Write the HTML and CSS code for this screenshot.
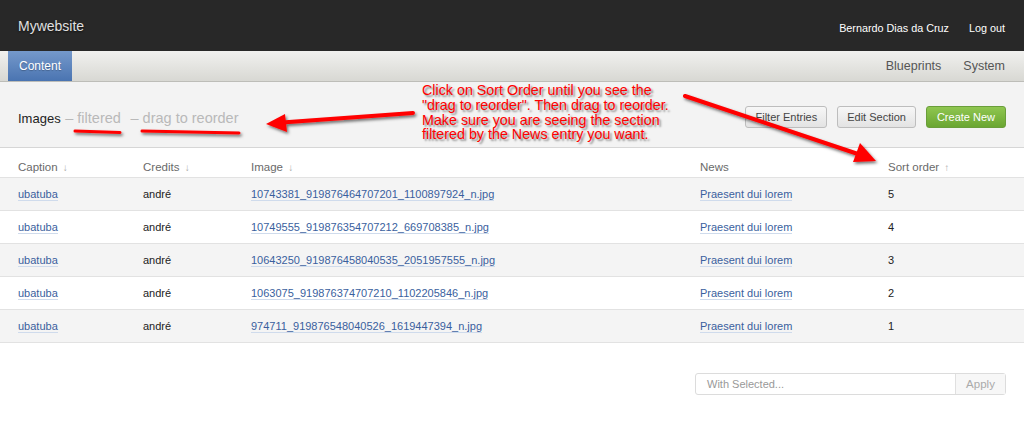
FILE: index.html
```html
<!DOCTYPE html>
<html>
<head>
<meta charset="utf-8">
<link rel="stylesheet" href="styles.css">
</head>
<body>
<header class="topbar">
  <div class="brand">Mywebsite</div>
  <div class="user">
    <span>Bernardo Dias da Cruz</span>
    <span>Log out</span>
  </div>
</header>
<nav class="navbar">
  <div class="tabs"><span class="tab active">Content</span></div>
  <div class="tabs right"><span class="tab">Blueprints</span><span class="tab">System</span></div>
</nav>
<section class="section-head">
  <h1 class="title">Images <span class="muted">– filtered</span> <span class="muted second">– drag to reorder</span></h1>
  <div class="actions">
    <button class="btn">Filter Entries</button>
    <button class="btn">Edit Section</button>
    <button class="btn primary">Create New</button>
  </div>
</section>
<table class="entries">
  <colgroup><col class="c1"><col class="c2"><col class="c3"><col class="c4"><col></colgroup>
  <thead>
    <tr><th>Caption <i>↓</i></th><th>Credits <i>↓</i></th><th>Image <i>↓</i></th><th>News</th><th>Sort order <i>↑</i></th></tr>
  </thead>
  <tbody>
    <tr class="odd"><td><a>ubatuba</a></td><td>andré</td><td><a>10743381_919876464707201_1100897924_n.jpg</a></td><td><a>Praesent dui lorem</a></td><td>5</td></tr>
    <tr><td><a>ubatuba</a></td><td>andré</td><td><a>10749555_919876354707212_669708385_n.jpg</a></td><td><a>Praesent dui lorem</a></td><td>4</td></tr>
    <tr class="odd"><td><a>ubatuba</a></td><td>andré</td><td><a>10643250_919876458040535_2051957555_n.jpg</a></td><td><a>Praesent dui lorem</a></td><td>3</td></tr>
    <tr><td><a>ubatuba</a></td><td>andré</td><td><a>1063075_919876374707210_1102205846_n.jpg</a></td><td><a>Praesent dui lorem</a></td><td>2</td></tr>
    <tr class="odd"><td><a>ubatuba</a></td><td>andré</td><td><a>974711_919876548040526_1619447394_n.jpg</a></td><td><a>Praesent dui lorem</a></td><td>1</td></tr>
  </tbody>
</table>
<div class="bulk">
  <div class="bulk-box"><span class="bulk-select">With Selected...</span><span class="bulk-apply">Apply</span></div>
</div>

<p class="note">Click on Sort Order until you see the "drag to reorder". Then drag to reorder. Make sure you are seeing the section filtered by the News entry you want.</p>
<svg class="marks" width="1024" height="425" viewBox="0 0 1024 425">
  <defs>
    <filter id="sh" x="-20%" y="-50%" width="140%" height="200%">
      <feDropShadow dx="1.5" dy="2" stdDeviation="1.6" flood-color="#000" flood-opacity="0.55"/>
    </filter>
  </defs>
  <g filter="url(#sh)" fill="#f00" stroke="#f00" stroke-linecap="round">
    <line x1="75" y1="131" x2="120" y2="132.5" stroke-width="3"/>
    <line x1="142" y1="131" x2="239" y2="133" stroke-width="3"/>
    <line x1="413" y1="113" x2="282" y2="122.5" stroke-width="4"/>
    <polygon points="266,124 285,114 287,132" stroke="none"/>
    <line x1="685" y1="96" x2="858" y2="154" stroke-width="4"/>
    <polygon points="876,161 853,162 860,143" stroke="none"/>
  </g>
</svg>
</body>
</html>
```

FILE: styles.css
```css
* { box-sizing: border-box; }
html, body { margin: 0; padding: 0; }
body {
  width: 1024px;
  height: 425px;
  overflow: hidden;
  position: relative;
  background: #fff;
  font-family: "Liberation Sans", Arial, sans-serif;
  color: #222;
}
.topbar {
  height: 51px;
  background: #282828;
  display: flex;
  align-items: center;
  justify-content: space-between;
  padding: 0 19px 0 18px;
}
.brand {
  color: #e0e0e0;
  font-size: 14px;
  text-shadow: 0 1px 2px rgba(0,0,0,0.6);
}
.user {
  display: flex;
  gap: 20px;
  color: #fff;
  font-size: 10.8px;
  padding-top: 4px;
}
.navbar {
  height: 31px;
  background: linear-gradient(#f1f1ef, #d8d8d3);
  border-bottom: 1px solid #bdbdb8;
  display: flex;
  justify-content: space-between;
  padding: 0 19px 0 8px;
}
.tabs { display: flex; gap: 22px; }
.tab {
  height: 30px;
  display: flex;
  align-items: center;
  font-size: 12.5px;
  color: #555;
}
.tab.active {
  background: linear-gradient(#7599cb, #4a74b1);
  color: #fff;
  font-size: 12px;
  padding: 0 11px 0 11px;
  text-shadow: 0 1px 1px rgba(0,0,0,0.25);
}
.section-head {
  height: 66px;
  background: #f3f3f3;
  border-bottom: 1px solid #d6d6d6;
  display: flex;
  align-items: center;
  justify-content: space-between;
  padding: 3px 18px 0 18px;
}
.title {
  margin: 0;
  font-weight: normal;
  font-size: 13px;
  color: #222;
  padding-top: 3px;
}
.title .muted { color: #b9b9b9; font-size: 14.5px; margin-left: 1px; }
.title .muted.second { margin-left: 6px; }
.actions { display: flex; gap: 10px; padding-top: 2px; }
.btn {
  height: 22px;
  font-family: inherit;
  font-size: 11px;
  color: #444;
  background: linear-gradient(#f7f7f7, #e3e3e3);
  border: 1px solid #bdbdbd;
  border-radius: 3px;
  padding: 0 9px;
}
.btn.primary {
  color: #fff;
  background: linear-gradient(#8fc650, #6aa631);
  border-color: #6a9e3a;
  padding: 0 10px;
}
.entries {
  width: 100%;
  border-collapse: collapse;
  table-layout: fixed;
  font-size: 11px;
}
.c1 { width: 143px; }
.c2 { width: 108px; }
.c3 { width: 449px; }
.c4 { width: 188px; }
.entries th {
  height: 29px;
  text-align: left;
  font-weight: normal;
  font-size: 11.5px;
  color: #6a6a6a;
  padding: 9px 0 0 0;
  border-bottom: 1px solid #e2e2e2;
}
.entries th i {
  font-style: normal;
  font-size: 10px;
  color: #aaa;
  margin-left: 2px;
}
.entries th:first-child, .entries td:first-child { padding-left: 18px; }
.entries td {
  height: 33px;
  padding: 0;
  border-bottom: 1px solid #e2e2e2;
  color: #222;
  white-space: nowrap;
}
.entries tr.odd td { background: #f4f4f4; }
.entries a {
  color: #3a5f9e;
  text-decoration: none;
  border-bottom: 1px solid #cfdbec;
}
.bulk {
  display: flex;
  justify-content: flex-end;
  padding: 30px 18px 0 0;
}
.bulk-box {
  width: 311px;
  height: 22px;
  border: 1px solid #dcdcdc;
  border-radius: 3px;
  display: flex;
  font-size: 11px;
  color: #999;
  background: #fff;
}
.bulk-select { flex: 1; display: flex; align-items: center; padding-left: 11px; }
.bulk-apply {
  width: 50px;
  border-left: 1px solid #e0e0e0;
  background: #f7f7f7;
  display: flex;
  align-items: center;
  justify-content: center;
  color: #aaa;
  font-size: 11.5px;
}
.note {
  position: absolute;
  left: 422px;
  top: 83px;
  width: 262px;
  margin: 0;
  font-size: 14.3px;
  line-height: 14.8px;
  color: #f00;
  text-shadow: 2px 2px 2px rgba(0,0,0,0.45);
}
.marks {
  position: absolute;
  left: 0;
  top: 0;
  pointer-events: none;
}
```
